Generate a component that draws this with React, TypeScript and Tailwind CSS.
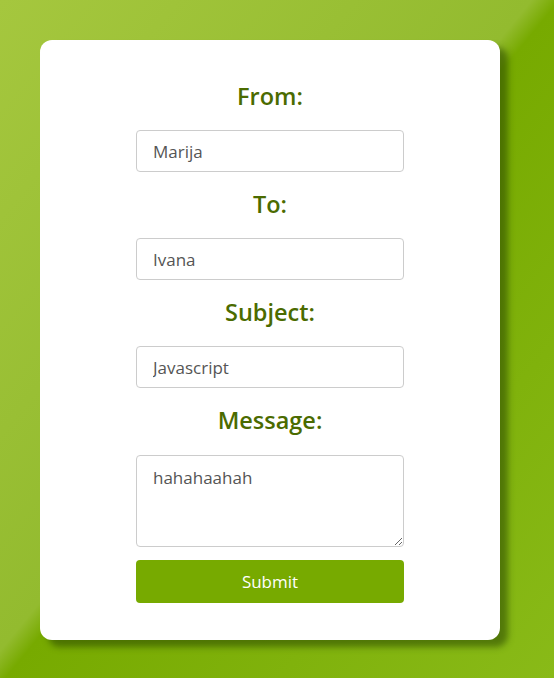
import React, { useState } from 'react';

const fields = [
    { id: 'from', label: 'From:', value: 'Marija' },
    { id: 'to', label: 'To:', value: 'Ivana' },
    { id: 'subject', label: 'Subject:', value: 'Javascript' },
];

const App: React.FC = () => {
    const [values, setValues] = useState<Record<string, string>>({
        from: 'Marija',
        to: 'Ivana',
        subject: 'Javascript',
        message: 'hahahaahah',
    });

    const update = (id: string, v: string) => setValues((prev) => ({ ...prev, [id]: v }));

    return (
        <div className="min-h-screen w-full bg-[linear-gradient(to_bottom_right,#a5c73e_0%,#93bb2f_48%,#77aa00_50.5%,#89ba18_100%)] pt-10 pl-10 font-['Open_Sans',sans-serif]">
            <form
                onSubmit={(e) => e.preventDefault()}
                className="w-[460px] h-[600px] bg-white rounded-xl shadow-[8px_7px_6px_rgba(40,70,0,0.55)] flex flex-col items-center pt-6"
            >
                {fields.map((f) => (
                    <div key={f.id} className="flex flex-col items-center">
                        <label htmlFor={f.id} className="mt-[18px] mb-5 h-7 leading-7 text-[23.5px] font-semibold text-[#4b6b00]">
                            {f.label}
                        </label>
                        <input
                            id={f.id}
                            type="text"
                            value={values[f.id]}
                            onChange={(e) => update(f.id, e.target.value)}
                            className="w-[268px] h-[42px] px-4 border border-[#cccccc] rounded-[4px] text-[17px] text-[#555555] outline-none"
                        />
                    </div>
                ))}
                <label htmlFor="message" className="mt-[18px] mb-[21px] h-7 leading-7 text-[23.5px] font-semibold text-[#4b6b00]">
                    Message:
                </label>
                <textarea
                    id="message"
                    value={values.message}
                    onChange={(e) => update('message', e.target.value)}
                    className="block w-[268px] h-[92px] px-4 py-[9px] border border-[#cccccc] rounded-[4px] text-[17px] text-[#555555] outline-none resize-both"
                />
                <button
                    type="submit"
                    className="mt-[13px] w-[268px] h-[43px] bg-[#77aa00] rounded-[4px] text-white text-[17px]"
                >
                    Submit
                </button>
            </form>
        </div>
    );
};

export default App;
